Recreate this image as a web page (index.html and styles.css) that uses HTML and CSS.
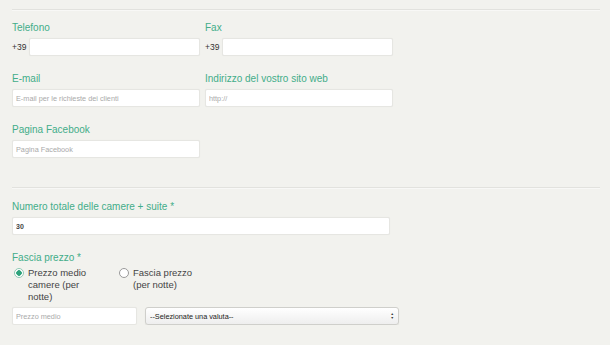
FILE: index.html
```html
<!DOCTYPE html>
<html lang="it">

<head>
    <meta charset="UTF-8">
    <meta name="viewport" content="width=device-width, initial-scale=1.0">
    <title>Contatti struttura</title>
    <link rel="stylesheet" href="styles.css">
</head>

<body>
    <div class="form-wrapper">
        <div class="divider"></div>

        <div class="form-row">
            <div class="field">
                <label class="field-label">Telefono</label>
                <div class="prefix-box">
                    <span class="prefix">+39</span>
                    <input type="text" class="text-input">
                </div>
            </div>
            <div class="field">
                <label class="field-label">Fax</label>
                <div class="prefix-box">
                    <span class="prefix">+39</span>
                    <input type="text" class="text-input">
                </div>
            </div>
        </div>

        <div class="form-row">
            <div class="field">
                <label class="field-label">E-mail</label>
                <input type="text" class="text-input" placeholder="E-mail per le richieste dei clienti">
            </div>
            <div class="field">
                <label class="field-label">Indirizzo del vostro sito web</label>
                <input type="text" class="text-input" placeholder="http://">
            </div>
        </div>

        <div class="form-row last">
            <div class="field">
                <label class="field-label">Pagina Facebook</label>
                <input type="text" class="text-input" placeholder="Pagina Facebook">
            </div>
        </div>

        <div class="divider lower"></div>

        <div class="field wide">
            <label class="field-label">Numero totale delle camere + suite *</label>
            <input type="text" class="text-input bold" value="30">
        </div>

        <div class="field price">
            <label class="field-label">Fascia prezzo *</label>
            <div class="radio-group">
                <label class="radio-option first">
                    <input type="radio" name="fascia" checked>
                    <span>Prezzo medio camere (per notte)</span>
                </label>
                <label class="radio-option">
                    <input type="radio" name="fascia">
                    <span>Fascia prezzo (per notte)</span>
                </label>
            </div>
            <div class="price-row">
                <input type="text" class="text-input price-input" placeholder="Prezzo medio">
                <div class="select-box">
                    <select class="currency">
                        <option>--Selezionate una valuta--</option>
                        <option>EUR</option>
                        <option>USD</option>
                    </select>
                    <span class="select-arrows">&#9650;<br>&#9660;</span>
                </div>
            </div>
        </div>
    </div>
</body>

</html>
```

FILE: styles.css
```css
* {
    box-sizing: border-box;
    margin: 0;
    padding: 0;
    font-family: 'Liberation Sans', Arial, Helvetica, sans-serif;
}

body {
    background-color: #f2f2ee;
}

.form-wrapper {
    width: 600px;
    padding: 9px 0 0 12px;
    display: flex;
    flex-direction: column;
}

.divider {
    height: 2px;
    border-top: 1px solid #e2e2de;
    border-bottom: 1px solid #f8f8f6;
    margin-bottom: 10px;
}

.divider.lower {
    margin-top: 29px;
    margin-bottom: 11px;
}

.form-row {
    display: flex;
    gap: 5px;
    margin-bottom: 16px;
}

.form-row.last {
    margin-bottom: 0;
}

.field {
    width: 188px;
    display: flex;
    flex-direction: column;
}

.field-label {
    color: #43ad89;
    font-size: 10px;
    line-height: 13px;
    margin-bottom: 4px;
}

.prefix-box {
    display: flex;
    align-items: center;
}

.prefix {
    width: 17px;
    font-size: 8.5px;
    color: #333;
}

.text-input {
    display: block;
    width: 100%;
    height: 18px;
    background-color: #fff;
    border: 1px solid #e6e6e2;
    border-radius: 2px;
    padding: 0 3px;
    font-size: 7.3px;
    color: #333;
    outline: none;
    box-shadow: 0 0 1px rgba(0, 0, 0, 0.06);
}

.text-input::placeholder {
    color: #aaa;
}

.text-input.bold {
    font-size: 7px;
    font-weight: bold;
    color: #444;
}

.prefix-box .text-input {
    flex: 1;
}

.field.wide {
    width: 378px;
    margin-bottom: 16px;
}

.field.price {
    width: 388px;
}

.field.price .field-label {
    margin-bottom: 3px;
}

.radio-group {
    display: flex;
}

.radio-option {
    display: flex;
    align-items: flex-start;
    gap: 4px;
    font-size: 9.5px;
    line-height: 12px;
    color: #444;
}

.radio-option.first {
    width: 107px;
    padding-left: 2px;
}

.radio-option.first span {
    width: 62px;
}

.radio-option span {
    width: 66px;
}

.radio-option input {
    appearance: none;
    width: 10px;
    height: 10px;
    margin-top: 1px;
    border: 1px solid #9a9a9a;
    border-radius: 50%;
    background-color: #fff;
    flex-shrink: 0;
}

.radio-option input:checked {
    border-color: #8fcab5;
    background: radial-gradient(circle, #2fa37c 0 2.5px, #fff 3px);
}

.price-row {
    display: flex;
    gap: 8px;
    margin-top: 4px;
}

.price-input {
    width: 125px;
    flex-shrink: 0;
}

.select-box {
    position: relative;
    width: 254px;
    height: 18px;
}

.currency {
    display: block;
    appearance: none;
    width: 100%;
    height: 100%;
    border: 1px solid #cfcfcb;
    border-radius: 3px;
    padding: 0 4px;
    font-size: 7.3px;
    color: #222;
    background: linear-gradient(#ffffff, #eeeeee);
    box-shadow: 0 1px 1px rgba(0, 0, 0, 0.08);
    outline: none;
}

.select-arrows {
    position: absolute;
    right: 5px;
    top: 5px;
    font-size: 3.5px;
    line-height: 4px;
    color: #333;
    pointer-events: none;
}
```
